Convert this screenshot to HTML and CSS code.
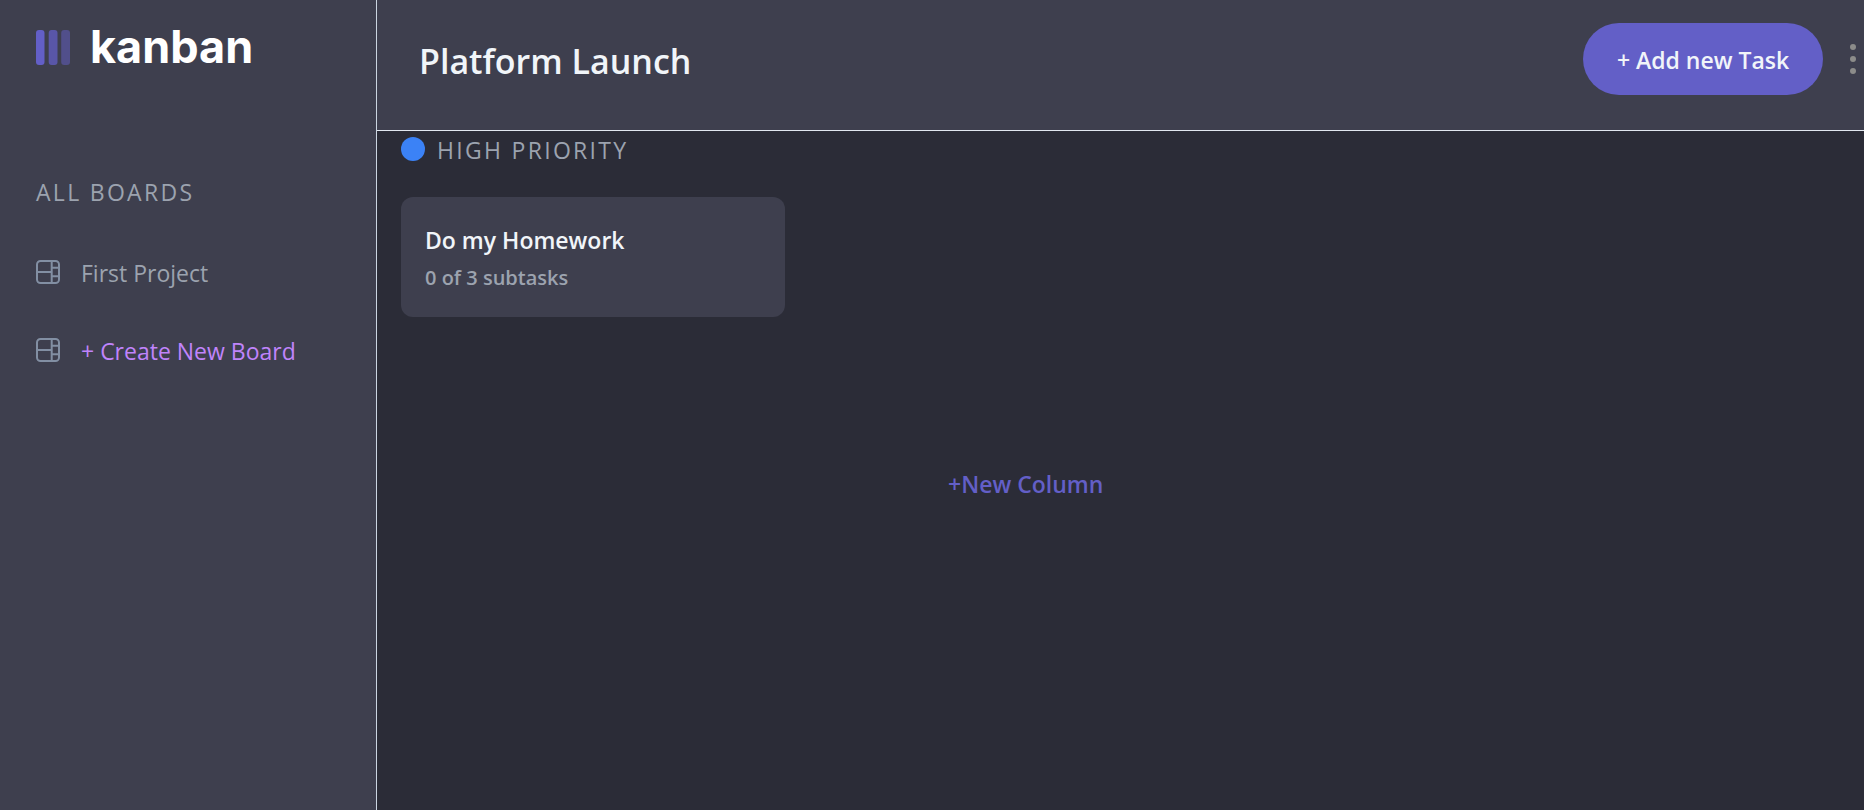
FILE: index.html
```html
<!DOCTYPE html>
<html lang="en">
<head>
<meta charset="utf-8">
<meta name="viewport" content="width=device-width, initial-scale=1">
<title>Kanban</title>
<link rel="stylesheet" href="styles.css">
</head>
<body>
<div class="app">
  <aside class="sidebar">
    <div class="brand">
      <svg class="brand-mark" viewBox="0 0 34 35" aria-hidden="true">
        <rect width="8.5" height="35" rx="3" fill="#635fc7"/>
        <rect x="12.7" width="8.8" height="35" rx="3" fill="#635fc7" opacity=".75"/>
        <rect x="25.2" width="8.8" height="35" rx="3" fill="#635fc7" opacity=".5"/>
      </svg>
      <span class="brand-name">kanban</span>
    </div>
    <h2 class="label">ALL BOARDS</h2>
    <nav class="boards">
      <a class="board-link" href="#">
        <svg class="board-icon" viewBox="0 0 24 24" aria-hidden="true"><rect x="1" y="1" width="22" height="22" rx="3.5"/><path d="M15.700 1v22M1 12h14.700M15.700 7.700H23M15.700 16.300H23"/></svg>
        <span>First Project</span>
      </a>
      <a class="board-link create" href="#">
        <svg class="board-icon" viewBox="0 0 24 24" aria-hidden="true"><rect x="1" y="1" width="22" height="22" rx="3.5"/><path d="M15.700 1v22M1 12h14.700M15.700 7.700H23M15.700 16.300H23"/></svg>
        <span>+ Create New Board</span>
      </a>
    </nav>
  </aside>
  <div class="content">
    <header class="header">
      <h1 class="title">Platform Launch</h1>
      <div class="actions">
        <button class="add-task" type="button">+ Add new Task</button>
        <button class="more" type="button" aria-label="Board options">
          <svg class="more-icon" viewBox="0 0 6 30" aria-hidden="true"><circle cx="3" cy="3" r="3"/><circle cx="3" cy="15" r="3"/><circle cx="3" cy="27" r="3"/></svg>
        </button>
      </div>
    </header>
    <main class="board">
      <section class="column">
        <h2 class="column-head"><span class="dot"></span><span class="label">HIGH PRIORITY</span></h2>
        <article class="card">
          <h3 class="card-title">Do my Homework</h3>
          <p class="card-meta">0 of 3 subtasks</p>
        </article>
      </section>
      <button class="new-column" type="button">+New Column</button>
    </main>
  </div>
</div>
</body>
</html>
```
FILE: styles.css
```css
* {
  box-sizing: border-box;
}

body,
h1,
h2,
h3,
p {
  margin: 0;
}

body {
  background: #2b2c37;
  color: #f1f5f9;
  font-family: "Open Sans", "Noto Sans", sans-serif;
  font-size: 23px;
  line-height: 36px;
}

button {
  border: 0;
  background: none;
  padding: 0;
  font: inherit;
  font-weight: 600;
  cursor: pointer;
}

svg {
  display: block;
  flex: none;
}

.app {
  display: flex;
  min-height: 100vh;
}

.sidebar {
  flex: none;
  width: 377px;
  padding: 23px 36px;
  background: #3e3f4e;
  border-right: 1px solid #cbd5e1;
}

.brand {
  display: flex;
  align-items: center;
  gap: 20px;
  height: 48px;
  margin-bottom: 103px;
}

.brand-mark {
  width: 34px;
  height: 35px;
}

.brand-name {
  color: #fff;
  font-family: Inter, sans-serif;
  font-size: 45px;
  font-weight: 700;
  line-height: 48px;
}

.label {
  color: #9ca3af;
  font-size: 23px;
  font-weight: 400;
  letter-spacing: 0.1em;
}

.boards {
  display: grid;
  gap: 42px;
  margin-top: 45px;
}

.board-link {
  display: flex;
  align-items: center;
  gap: 21px;
  color: #9ca3af;
  text-decoration: none;
}

.board-link.create {
  color: #c084fc;
}

.board-icon {
  width: 24px;
  height: 24px;
  margin-bottom: 2px;
  fill: none;
  stroke: #828fa3;
  stroke-width: 2;
}

.content {
  display: flex;
  flex: 1;
  flex-direction: column;
  min-width: 0;
}

.header {
  display: flex;
  align-items: flex-start;
  justify-content: space-between;
  height: 131px;
  padding: 23px 8px 0 42px;
  background: #3e3f4e;
  border-bottom: 1px solid #e2e8f0;
}

.title {
  padding-top: 12px;
  font-size: 34px;
  font-weight: 600;
  line-height: 52px;
}

.actions {
  display: flex;
  align-items: center;
  gap: 27px;
}

.add-task {
  width: 240px;
  height: 72px;
  padding-top: 2px;
  border-radius: 36px;
  background: #635fc7;
  color: #f1f5f9;
}

.more-icon {
  width: 6px;
  height: 30px;
  fill: #8c8c8a;
}

.board {
  display: flex;
  flex: 1;
  padding: 0 24px;
}

.column {
  width: 384px;
}

.column-head {
  display: flex;
  align-items: center;
  gap: 12px;
  height: 36px;
}

.column-head .label {
  padding-top: 2px;
}

.dot {
  width: 24px;
  height: 24px;
  border-radius: 50%;
  background: #3b82f6;
}

.card {
  margin-top: 30px;
  padding: 25px 24px 21px;
  border-radius: 12px;
  background: #3e3f4e;
}

.card-title {
  font-size: 23px;
  font-weight: 600;
  line-height: 36px;
}

.card-meta {
  padding-top: 2px;
  color: #9ca3af;
  font-size: 20px;
  font-weight: 600;
  line-height: 36px;
}

.new-column {
  align-self: flex-start;
  margin: 335px 0 0 163px;
  color: #635fc7;
}
```
